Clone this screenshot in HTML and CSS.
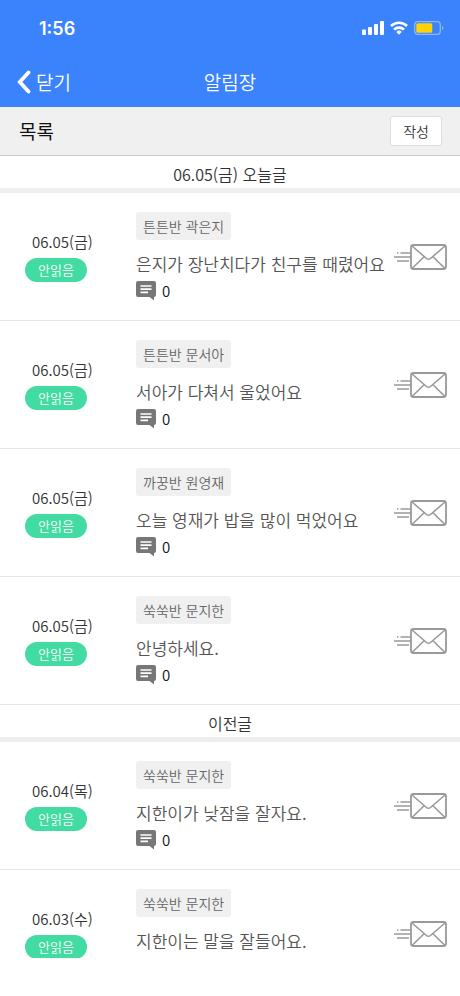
FILE: index.html
```html
<!DOCTYPE html>
<html lang="ko">
<head>
    <meta charset="UTF-8">
    <meta name="viewport" content="width=device-width, initial-scale=1.0">
    <title>알림장</title>
    <link rel="stylesheet" href="styles.css">
</head>
<body>
    <svg class="sprite" aria-hidden="true">
        <symbol id="icon-comment" viewBox="0 0 20 20">
            <path d="M2 0h16A2 2 0 0 1 20 2V14a2 2 0 0 1-2 2V19.500L13.500 16H2A2 2 0 0 1 0 14V2A2 2 0 0 1 2 0z" fill="#777"/>
            <path d="M4.500 5h11M4.500 8.200h11M4.500 11.400h7.500" stroke="#fff" stroke-width="1.700"/>
        </symbol>
        <symbol id="icon-mail" viewBox="0 0 54 28" fill="none" stroke="#999">
            <rect x="18" y="2" width="35" height="24" rx="2.500" stroke-width="1.800"/>
            <path d="M19 3l14.500 12.500q2 1.600 4 0L52 3M19 25.500l11.800-11.500M52 25.500l-11.800-11.500" stroke-width="1.600"/>
            <path d="M4 10h1.500M7.500 10h10M1 14h17M4 18h12" stroke-width="1.500"/>
        </symbol>
    </svg>

    <div class="app">
        <header class="header">
            <div class="status">
                <span class="time">1:56</span>
                <div class="status-icons">
                    <svg width="22" height="14" viewBox="0 0 22 14" fill="#fff">
                        <rect x="0" y="8.500" width="4" height="5.500" rx="1"/>
                        <rect x="6" y="6" width="4" height="8" rx="1"/>
                        <rect x="12" y="3" width="4" height="11" rx="1"/>
                        <rect x="18" y="0" width="4" height="14" rx="1"/>
                    </svg>
                    <svg width="18" height="14" viewBox="0 0 18 14" fill="none" stroke="#fff" stroke-width="2.600">
                        <path d="M1 5a11.500 11.500 0 0 1 16 0M4 8.600a7.200 7.200 0 0 1 10 0"/>
                        <path d="M9 13.700l-2.700-2.800a3.900 3.900 0 0 1 5.400 0z" fill="#fff" stroke="none"/>
                    </svg>
                    <svg width="30" height="14" viewBox="0 0 30 14">
                        <rect x=".7" y=".7" width="25.600" height="12.600" rx="3" fill="none" stroke="#8eb7fe" stroke-width="1.300"/>
                        <rect x="2.300" y="2.300" width="16" height="9.400" rx="1.500" fill="#ffd20a"/>
                        <path d="M28 5v4q1.500-.5 1.500-2T28 5z" fill="#8eb7fe"/>
                    </svg>
                </div>
            </div>
            <nav class="nav">
                <button type="button" class="close">
                    <svg width="14" height="24" viewBox="0 0 14 24" fill="none" stroke="#fff" stroke-width="3.800">
                        <path d="M11.500 2.500L2.800 12L11.500 21.500" stroke-linecap="round"/>
                    </svg>
                    닫기
                </button>
                <h1>알림장</h1>
            </nav>
        </header>

        <div class="toolbar">
            <h2>목록</h2>
            <button type="button" class="write">작성</button>
        </div>

        <main class="list">
            <h3 class="section">06.05(금) 오늘글</h3>
            <article class="item">
                <div class="date">
                    <time>06.05(금)</time>
                    <span class="badge">안읽음</span>
                </div>
                <div class="content">
                    <span class="name">튼튼반 곽은지</span>
                    <p class="title">은지가 장난치다가 친구를 때렸어요</p>
                    <div class="comments"><svg><use href="#icon-comment"/></svg>0</div>
                </div>
                <svg class="mail"><use href="#icon-mail"/></svg>
            </article>
            <article class="item">
                <div class="date">
                    <time>06.05(금)</time>
                    <span class="badge">안읽음</span>
                </div>
                <div class="content">
                    <span class="name">튼튼반 문서아</span>
                    <p class="title">서아가 다쳐서 울었어요</p>
                    <div class="comments"><svg><use href="#icon-comment"/></svg>0</div>
                </div>
                <svg class="mail"><use href="#icon-mail"/></svg>
            </article>
            <article class="item">
                <div class="date">
                    <time>06.05(금)</time>
                    <span class="badge">안읽음</span>
                </div>
                <div class="content">
                    <span class="name">까꿍반 원영재</span>
                    <p class="title">오늘 영재가 밥을 많이 먹었어요</p>
                    <div class="comments"><svg><use href="#icon-comment"/></svg>0</div>
                </div>
                <svg class="mail"><use href="#icon-mail"/></svg>
            </article>
            <article class="item">
                <div class="date">
                    <time>06.05(금)</time>
                    <span class="badge">안읽음</span>
                </div>
                <div class="content">
                    <span class="name">쑥쑥반 문지한</span>
                    <p class="title">안녕하세요.</p>
                    <div class="comments"><svg><use href="#icon-comment"/></svg>0</div>
                </div>
                <svg class="mail"><use href="#icon-mail"/></svg>
            </article>

            <h3 class="section">이전글</h3>
            <article class="item">
                <div class="date">
                    <time>06.04(목)</time>
                    <span class="badge">안읽음</span>
                </div>
                <div class="content">
                    <span class="name">쑥쑥반 문지한</span>
                    <p class="title">지한이가 낮잠을 잘자요.</p>
                    <div class="comments"><svg><use href="#icon-comment"/></svg>0</div>
                </div>
                <svg class="mail"><use href="#icon-mail"/></svg>
            </article>
            <article class="item">
                <div class="date">
                    <time>06.03(수)</time>
                    <span class="badge">안읽음</span>
                </div>
                <div class="content">
                    <span class="name">쑥쑥반 문지한</span>
                    <p class="title">지한이는 말을 잘들어요.</p>
                </div>
                <svg class="mail"><use href="#icon-mail"/></svg>
            </article>
        </main>
    </div>
</body>
</html>
```
FILE: styles.css
```css
* {
    box-sizing: border-box;
}
body {
    margin: 0;
    background: #fff;
    color: #333;
    font-family: "Noto Sans CJK KR", sans-serif;
    font-weight: 350;
}
h1, h2, h3, p {
    margin: 0;
    font-weight: inherit;
}
button {
    font-family: inherit;
    font-weight: inherit;
    cursor: pointer;
}
svg {
    flex: none;
}
.sprite {
    display: none;
}
/* the bottom padding keeps the home indicator area empty */
.app {
    display: flex;
    flex-direction: column;
    height: 100vh;
    padding-bottom: 38px;
}

.header {
    flex: none;
    background: #3a83fd;
    color: #fff;
}
.status {
    display: flex;
    align-items: center;
    justify-content: space-between;
    height: 56px;
    padding: 0 16px 0 39px;
}
.time {
    font-family: Inter, sans-serif;
    font-size: 18px;
    font-weight: 600;
}
.status-icons {
    display: flex;
    gap: 6px;
}
.nav {
    display: grid;
    grid-template-columns: 1fr auto 1fr;
    align-items: center;
    height: 51px;
    padding: 0 17px;
}
.nav h1 {
    font-size: 19px;
    line-height: 28px;
}
.close {
    display: flex;
    align-items: center;
    gap: 5px;
    padding: 0;
    border: none;
    background: none;
    color: #fff;
    font-size: 19px;
    line-height: 28px;
}

.toolbar {
    flex: none;
    display: flex;
    align-items: center;
    justify-content: space-between;
    height: 49px;
    padding: 0 18px 0 19px;
    background: #f0f0f0;
    border-bottom: 1px solid #ccc;
}
.toolbar h2 {
    color: #111;
    font-size: 19px;
    font-weight: 400;
    line-height: 28px;
}
.write {
    height: 30px;
    padding: 0 12px;
    border: 1px solid #ddd;
    border-radius: 3px;
    background: #fff;
    color: #333;
    font-size: 14px;
    line-height: 20px;
}

.list {
    flex: 1;
    min-height: 0;
    overflow: hidden;
}
.section {
    height: 37px;
    border-bottom: 5px solid #eee;
    font-size: 16px;
    line-height: 36px;
    text-align: center;
}
.item {
    display: flex;
    height: 128px;
    padding: 19px 13px 0 25px;
    border-bottom: 1px solid #e6e6e6;
}
.date {
    flex: none;
    width: 111px;
    padding-top: 18px;
}
.date time {
    display: block;
    padding-left: 7px;
    font-size: 15px;
    line-height: 24px;
}
.badge {
    display: block;
    width: 62px;
    margin-top: 4px;
    border-radius: 12px;
    background: #42dca3;
    color: #fff;
    font-size: 13px;
    line-height: 24px;
    text-align: center;
}
.content {
    flex: 1;
    min-width: 0;
}
.name {
    display: inline-block;
    padding: 0 7px;
    border-radius: 3px;
    background: #f0f0f0;
    color: #666;
    font-size: 14px;
    line-height: 28px;
    vertical-align: top;
}
.title {
    margin-top: 10px;
    color: #555;
    font-size: 17px;
    line-height: 28px;
    white-space: nowrap;
}
.comments {
    display: flex;
    align-items: center;
    gap: 6px;
    margin-top: 2px;
    color: #111;
    font-size: 15px;
    line-height: 22px;
}
.comments svg {
    width: 20px;
    height: 20px;
}
.mail {
    width: 54px;
    height: 28px;
    margin-top: 31px;
}
```
